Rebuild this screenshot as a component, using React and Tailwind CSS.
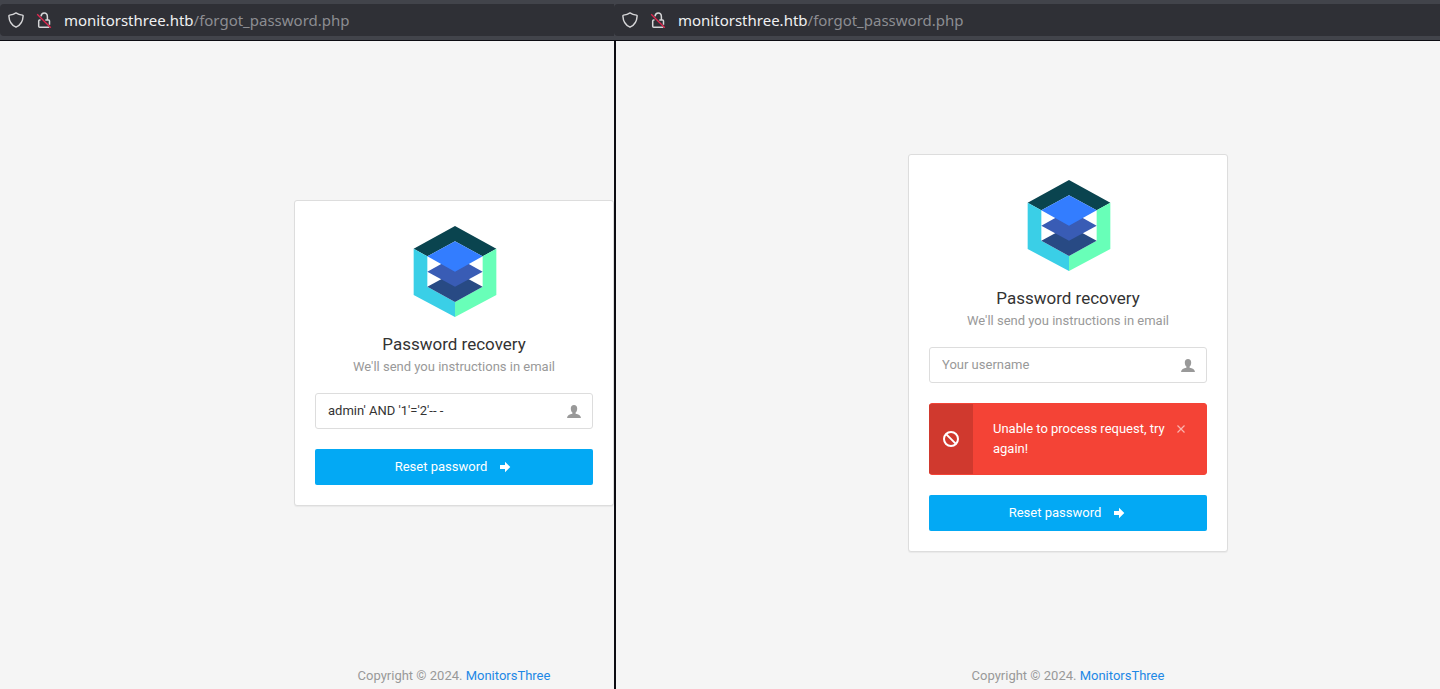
function ShieldIcon() {
  return (
    <svg className="h-4 w-4" viewBox="0 0 16 16" fill="none" stroke="#d6d6d8" strokeWidth="1.4" strokeLinejoin="round" aria-hidden="true">
      <path d="M8 .9C6.400 2 3.700 2.900 1.600 3.100 1 3.200.8 3.500.9 4.100c.2 4.800 2.400 9 7.100 11.100 4.700-2.100 6.900-6.300 7.100-11.100.1-.6-.1-.9-.7-1C12.300 2.900 9.600 2 8 .9z" />
    </svg>
  );
}

function InsecureLockIcon() {
  return (
    <svg className="h-4 w-4" viewBox="0 0 16 16" fill="none" aria-hidden="true">
      <path d="M5 4.300C5.300 2.100 6.500.9 8.200.9c2 0 3.200 1.500 3.200 3.800v3.200M4.500 8H3.700c-.6 0-1 .4-1 1v5.200c0 .6.4 1 1 1h9.600M9.300 8h3.200c.6 0 1 .4 1 1v3.800" stroke="#d6d6d8" strokeWidth="1.500" />
      <path d="M1.200 2.200l13.600 13.600" stroke="#e22850" strokeWidth="1.300" />
    </svg>
  );
}

function Logo() {
  return (
    <svg className="h-[92px] w-[84px] overflow-visible" viewBox="36 33 252 276" role="img" aria-label="MonitorsThree">
      <path fill="#0a444f" d="M165 33l124 68-41 23-83-45-83 45-41-23z" />
      <path fill="#3acfe7" d="M41 101l41 23v91l83 46v45L41 240z" />
      <path fill="#68ffb8" d="M289 101l-41 23v91l-83 46v45l124-66z" />
      <path fill="#284a84" d="M165 170l83 45-83 46-83-46z" />
      <path fill="#395cb5" d="M165 124l83 46-83 45-83-45z" />
      <path fill="#337dff" d="M165 79l83 45-83 46-83-46z" />
    </svg>
  );
}

function UserIcon() {
  return (
    <svg className="h-4 w-4" viewBox="0 0 16 16" fill="#999" aria-hidden="true">
      <path d="M8 2c2.100 0 3.200 1.400 3.200 3.500 0 1.900-.7 3.300-1.600 4.100v1.100c2.900.3 5.100 1.700 5.400 4.300H1c.3-2.600 2.500-4 5.400-4.300V9.600C5.500 8.800 4.800 7.400 4.800 5.500 4.800 3.400 5.900 2 8 2z" />
    </svg>
  );
}

function ArrowIcon() {
  return (
    <svg className="h-4 w-4" viewBox="0 0 16 16" fill="currentColor" aria-hidden="true">
      <path d="M13.300 8L8 13.300V10H3V6h5V2.700z" />
    </svg>
  );
}

function BlockedIcon() {
  return (
    <svg className="h-4 w-4" viewBox="0 0 16 16" fill="none" stroke="#fff" strokeWidth="2" aria-hidden="true">
      <circle cx="8" cy="8" r="7" />
      <path d="M3.100 3.100l9.800 9.800" />
    </svg>
  );
}

function AddressBar() {
  return (
    <header className="border-b border-[#0c0c12] bg-[#42444b] py-1">
      <div className="flex h-8 items-center gap-3 rounded-l bg-[#2f3036] px-2">
        <ShieldIcon />
        <InsecureLockIcon />
        <p className="whitespace-nowrap font-['Noto_Sans',sans-serif] text-[15px] leading-6 text-[#f0f0f2]">
          monitorsthree.htb<span className="text-[#8c8d92]">/forgot_password.php</span>
        </p>
      </div>
    </header>
  );
}

function Alert({ children }) {
  return (
    <div role="alert" className="mb-5 flex rounded-[3px] border border-[#f44336] bg-[#f44336] text-white">
      <div className="-ml-px flex w-11 shrink-0 items-center justify-center rounded-l-xs bg-[#d0392e]">
        <BlockedIcon />
      </div>
      <p className="flex-1 py-[15px] pl-5">{children}</p>
      <button type="button" aria-label="Close" className="mt-[15px] mr-[19px] flex h-5 w-3 items-center justify-center">
        <svg className="h-2 w-2" viewBox="0 0 8 8" stroke="#fff" strokeWidth="1.200" strokeOpacity=".6" aria-hidden="true">
          <path d="M.5.5l7 7M7.500.5l-7 7" />
        </svg>
      </button>
    </div>
  );
}

function RecoveryPage({ username, error }) {
  return (
    <div className="flex flex-1 flex-col items-center text-[13px] leading-5">
      <main className="flex flex-1 items-center">
        <form className="w-80 rounded-[3px] border border-[#ddd] bg-white p-5 shadow-[0_1px_1px_rgba(0,0,0,0.05)]">
          <div className="flex flex-col items-center pt-[5px] pb-4">
            <Logo />
            <h1 className="mt-[14px] text-[17px] leading-6 text-[#333]">Password recovery</h1>
            <p className="mt-px text-[#999]">We'll send you instructions in email</p>
          </div>
          <label className="mb-5 flex h-9 items-center rounded-[3px] border border-[#ddd] bg-white pr-[10px]">
            <input
              type="text"
              aria-label="Your username"
              defaultValue={username}
              placeholder="Your username"
              className="min-w-0 flex-1 bg-transparent pl-3 text-[#333] outline-none placeholder:text-[#999]"
            />
            <UserIcon />
          </label>
          {error && <Alert>{error}</Alert>}
          <button type="button" className="flex h-9 w-full items-center justify-center gap-[10px] rounded-xs bg-[#03a9f4] text-white">
            Reset password
            <ArrowIcon />
          </button>
        </form>
      </main>
      <footer className="pb-0.5 leading-[22px] text-[#999]">
        Copyright © 2024. <a href="#" className="text-[#1e88e5]">MonitorsThree</a>
      </footer>
    </div>
  );
}

export default function App() {
  return (
    <div className="flex min-h-screen bg-[#f5f5f5] font-[Roboto,sans-serif]">
      <section className="flex w-[614px] shrink-0 flex-col overflow-hidden">
        <AddressBar />
        <div className="flex w-[908px] flex-1">
          <RecoveryPage username="admin' AND '1'='2'-- -" />
        </div>
      </section>
      <section className="flex min-w-0 flex-1 flex-col overflow-hidden">
        <AddressBar />
        <div className="flex flex-1 border-l-2 border-[#0c0c12]">
          <div className="flex w-[904px] shrink-0">
            <RecoveryPage error="Unable to process request, try again!" />
          </div>
        </div>
      </section>
    </div>
  );
}
